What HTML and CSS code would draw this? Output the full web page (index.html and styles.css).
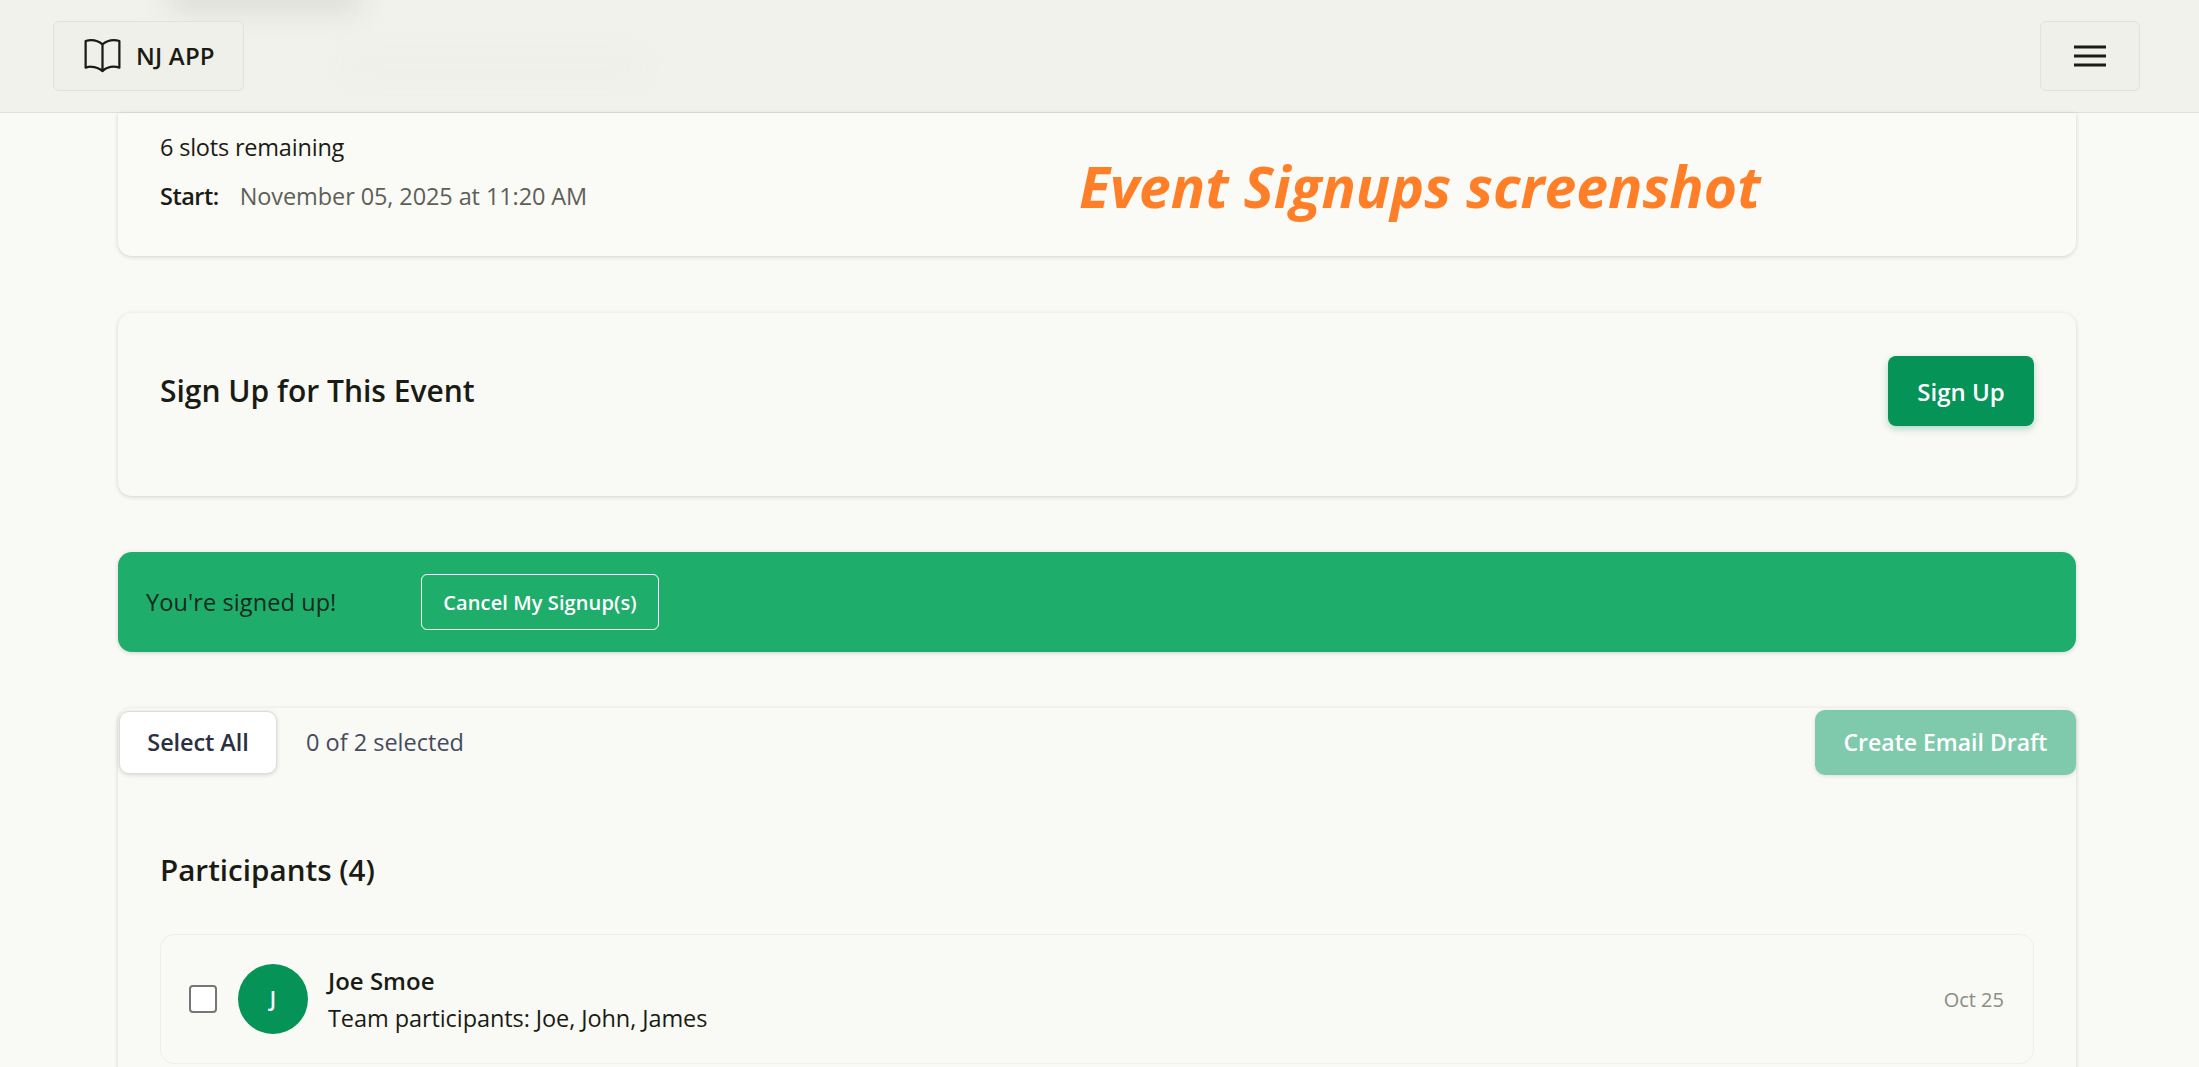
FILE: index.html
```html
<!DOCTYPE html>
<html lang="en">
<head>
<meta charset="utf-8">
<title>Event Signups</title>
<link rel="stylesheet" href="styles.css">
</head>
<body>
<header class="topbar">
  <div class="blur blur-a"></div>
  <div class="blur blur-b"></div>
  <a class="brand">
    <svg class="brand-icon" viewBox="0 0 24 24" fill="none" stroke="currentColor" stroke-width="1.2" stroke-linecap="round" stroke-linejoin="round"><path d="M12 6.04A8.97 8.97 0 0 0 6 3.75c-1.05 0-2.06.18-3 .51v14.25A9 9 0 0 1 6 18c2.31 0 4.41.87 6 2.29m0-14.25A8.97 8.97 0 0 1 18 3.75c1.05 0 2.06.18 3 .51v14.25A9 9 0 0 0 18 18a8.97 8.97 0 0 0-6 2.29m0-14.25v14.25"/></svg>
    <span>NJ APP</span>
  </a>
  <button class="menu-btn" aria-label="Menu">
    <svg viewBox="0 0 32 22" width="32" height="22" fill="none" stroke="currentColor" stroke-width="2.8"><path d="M0 2h32M0 11h32M0 20h32"/></svg>
  </button>
</header>

<main class="page">
  <section class="card card-event">
    <p class="slots">6 slots remaining</p>
    <p class="start"><strong>Start:</strong><span>November 05, 2025 at 11:20 AM</span></p>
    <div class="annotation">Event Signups screenshot</div>
  </section>

  <section class="card card-signup">
    <h2 class="card-title">Sign Up for This Event</h2>
    <button class="btn-primary">Sign Up</button>
  </section>

  <section class="alert">
    <span class="alert-text">You're signed up!</span>
    <button class="btn-outline">Cancel My Signup(s)</button>
  </section>

  <section class="card card-participants">
    <div class="toolbar">
      <button class="btn-white">Select All</button>
      <span class="count">0 of 2 selected</span>
      <button class="btn-draft">Create Email Draft</button>
    </div>
    <h2 class="list-title">Participants (4)</h2>
    <div class="person">
      <input class="check" type="checkbox">
      <div class="avatar">J</div>
      <div class="person-info">
        <div class="person-name">Joe Smoe</div>
        <div class="person-team">Team participants: Joe, John, James</div>
      </div>
      <div class="person-date">Oct 25</div>
    </div>
  </section>
</main>
</body>
</html>
```
FILE: styles.css
```css
* { box-sizing: border-box; }
html, body { margin: 0; height: 100%; overflow: hidden; }
body {
  background: #f9f9f5;
  color: #1a1c14;
  font-family: "Open Sans", "Noto Sans", sans-serif;
  font-size: 23.5px;
}
p, h2 { margin: 0; }
button { font-family: inherit; cursor: pointer; }

.topbar {
  position: relative;
  height: 113px;
  background: #f1f2ec;
  border-bottom: 1px solid #dfe0d8;
  display: flex;
  align-items: center;
  justify-content: space-between;
  padding: 0 59px 1px 53px;
  overflow: hidden;
}
.blur { position: absolute; filter: blur(14px); }
.blur-a { left: 170px; top: -22px; width: 190px; height: 34px; background: #dcddd6; }
.blur-b { left: 350px; top: 58px; width: 290px; height: 16px; background: #edeee7; }
.brand {
  position: relative;
  height: 70px;
  width: 191px;
  display: flex;
  align-items: center;
  gap: 11px;
  padding-left: 26px;
  background: #eff0ea;
  border: 1px solid #e1e2da;
  border-radius: 6px;
  font-size: 24px;
  font-weight: 600;
  letter-spacing: 0.2px;
}
.brand-icon { width: 45px; height: 45px; flex: none; }
.menu-btn {
  position: relative;
  width: 100px;
  height: 70px;
  background: #eff0ea;
  border: 1px solid #e1e2da;
  border-radius: 6px;
  color: #1a1c14;
  display: flex;
  align-items: center;
  justify-content: center;
  padding: 0;
}

.page { padding: 0 123px 0 118px; display: flex; flex-direction: column; gap: 56px; }

.card {
  background: #f9f9f5;
  border-radius: 14px;
  box-shadow: 0 1px 4px rgba(0,0,0,.16);
}
.card-event {
  position: relative;
  height: 143px;
  border-radius: 0 0 14px 14px;
  padding: 18px 42px 0;
  background: #fafaf6;
}
.slots { line-height: 32px; letter-spacing: -0.2px; }
.start { margin-top: 17px; line-height: 32px; display: flex; gap: 21px; }
.start strong { font-weight: 600; letter-spacing: -0.5px; }
.start span { color: #5e6056; letter-spacing: -0.1px; }
.annotation {
  position: absolute;
  left: 961px;
  top: 33px;
  font-size: 57px;
  line-height: 80px;
  font-weight: 700;
  font-style: italic;
  color: #fe7f27;
  white-space: nowrap;
}

.card-signup {
  height: 183px;
  margin-top: 1px;
  padding: 43px 42px 0;
  display: flex;
  justify-content: space-between;
  align-items: flex-start;
}
.card-title { font-size: 30px; font-weight: 600; line-height: 70px; }
.btn-primary {
  width: 146px;
  height: 70px;
  background: #059357;
  color: #fff;
  border: 0;
  border-radius: 8px;
  font-size: 24px;
  font-weight: 600;
  box-shadow: 0 3px 7px rgba(5,147,87,.3);
}

.alert {
  height: 100px;
  background: #1fad6b;
  border-radius: 14px;
  box-shadow: 0 1px 4px rgba(0,0,0,.16);
  display: flex;
  align-items: center;
  padding-left: 28px;
  gap: 84px;
}
.alert-text { width: 191px; font-size: 23.5px; letter-spacing: 0.1px; color: #15291c; white-space: nowrap; }
.btn-outline {
  width: 238px;
  height: 56px;
  background: transparent;
  color: #fff;
  border: 1px solid #fff;
  border-radius: 6px;
  font-size: 20px;
  font-weight: 600;
  letter-spacing: 0.1px;
  padding: 0;
  white-space: nowrap;
}

.card-participants {
  height: 600px;
  border-radius: 14px 14px 0 0;
  padding: 0 1px;
}
.toolbar { display: flex; align-items: center; padding-top: 2px; height: 66px; }
.btn-white {
  width: 158px;
  height: 63px;
  background: #fff;
  color: #2b3040;
  border: 1px solid #dcdcdc;
  border-radius: 10px;
  font-size: 23.5px;
  font-weight: 600;
  letter-spacing: -0.1px;
  box-shadow: 0 1px 4px rgba(0,0,0,.14);
  padding: 0;
}
.count { margin-left: 29px; color: #454c5c; font-size: 23.5px; }
.btn-draft {
  margin-left: auto;
  margin-right: -1px;
  width: 261px;
  height: 65px;
  background: #7fcaac;
  color: #fff;
  border: 0;
  border-radius: 10px;
  font-size: 23px;
  font-weight: 600;
  box-shadow: 0 1px 4px rgba(0,0,0,.12);
  padding: 0;
}
.list-title { margin: 72px 0 0 41px; font-size: 29.6px; font-weight: 600; line-height: 48px; }
.person {
  margin: 40px 41px 0;
  height: 130px;
  border: 1px solid #efefea;
  border-radius: 14px;
  display: flex;
  align-items: center;
  padding: 0 29px 0 28px;
}
.check {
  appearance: none;
  width: 28px;
  height: 28px;
  margin: 0 21px 0 0;
  background: #fff;
  border: 2px solid #767676;
  border-radius: 4px;
  flex: none;
}
.avatar {
  width: 70px;
  height: 70px;
  flex: none;
  border-radius: 50%;
  background: #059357;
  color: #fff;
  font-size: 21px;
  font-weight: 600;
  display: flex;
  align-items: center;
  justify-content: center;
}
.person-info { margin-left: 20px; padding-top: 2px; flex: 1; }
.person-name { font-size: 24px; font-weight: 600; line-height: 34px; }
.person-team { font-size: 23.5px; line-height: 36px; margin-top: 2px; letter-spacing: -0.08px; }
.person-date { font-size: 20px; color: #8b8c84; }
```
